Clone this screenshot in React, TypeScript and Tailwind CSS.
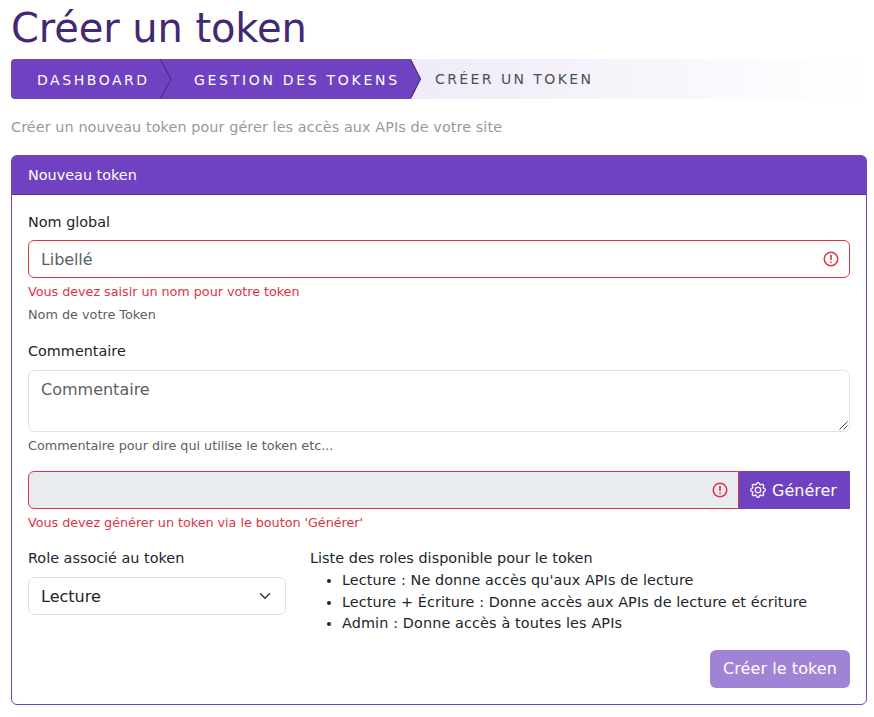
import type { ReactNode } from "react";
import { BsGear } from "react-icons/bs";

function InvalidIcon() {
  return (
    <svg className="size-[18px] shrink-0" viewBox="0 0 12 12" fill="none" stroke="#dc3545">
      <circle cx="6" cy="6" r="4.5" />
      <path strokeLinejoin="round" d="M5.9 3.7h.2L6 6.4z" />
      <circle cx="6" cy="8.2" r=".6" fill="#dc3545" stroke="none" />
    </svg>
  );
}

function Label({ children }: { children: ReactNode }) {
  return <div className="h-[22px] text-[14.4px] leading-[22px]">{children}</div>;
}

function Feedback({ children }: { children: ReactNode }) {
  return <div className="mt-1 h-[19px] text-[12.8px] leading-[19px] tracking-[-0.05px] text-[#dc3545]">{children}</div>;
}

const roles = [
  "Lecture : Ne donne accès qu'aux APIs de lecture",
  "Lecture + Écriture : Donne accès aux APIs de lecture et écriture",
  "Admin : Donne accès à toutes les APIs",
];

export default function App() {
  return (
    <div className="h-[717px] overflow-hidden whitespace-nowrap bg-white pl-[11px] pr-[7px] pt-[4px] font-['DejaVu_Sans',sans-serif] text-[#212529]">
      <h1 className="h-[55px] text-[40px] leading-[48px] tracking-[-0.1px] text-[#432874]">Créer un token</h1>

      <nav className="flex h-10 overflow-hidden rounded-[4px] bg-linear-to-r from-[#e2d9f3] to-white text-[14px] leading-[42px] tracking-[2.65px]">
        <div className="w-[149px] bg-[#6f42c1] pl-[26px] tracking-[2.55px] text-white">DASHBOARD</div>
        <svg className="h-10 w-[12px] bg-[#6f42c1]" viewBox="0 0 12 40" fill="none">
          <path d="M0.5 0.5 11 20 0.5 39.5" stroke="#432874" />
        </svg>
        <div className="w-[239px] bg-[#6f42c1] pl-[22px] tracking-[2.7px] text-white">GESTION DES TOKENS</div>
        <svg className="h-10 w-[12px]" viewBox="0 0 12 40">
          <path d="M0 0 9.8 20 0 40z" fill="#6f42c1" />
          <path d="M-0.5 0.5 9.6 20 -0.5 39.5" fill="none" stroke="#432874" />
        </svg>
        <div className="pl-[12px] leading-[41px] tracking-[2.42px] text-[#495057]">CRÉER UN TOKEN</div>
      </nav>

      <p className="mt-[17px] h-[22px] text-[14.4px] leading-[22px] tracking-[0.08px] text-[#999]">
        Créer un nouveau token pour gérer les accès aux APIs de votre site
      </p>

      <section className="mt-[17px] h-[550px] rounded-[6px] border border-[#6f42c1]">
        <header className="h-[39px] rounded-t-[4px] border-b border-[#59359a] bg-[#6f42c1] pl-4 text-[14.4px] leading-[38px] text-white">
          Nouveau token
        </header>
        <div className="flex flex-col px-4 pt-4">
          <Label>Nom global</Label>
          <div className="mt-[7px] flex h-[38px] items-center justify-between rounded-[6px] border border-[#dc3545] pl-3 pr-[9px] text-[#595f64]">
            <span className="pt-px tracking-[-0.1px]">Libellé</span>
            <InvalidIcon />
          </div>
          <Feedback>Vous devez saisir un nom pour votre token</Feedback>
          <div className="mt-1 h-[19px] text-[12.8px] leading-[19px] text-[#595f64]">Nom de votre Token</div>

          <div className="mt-4">
            <Label>Commentaire</Label>
          </div>
          <div className="mt-[8px] flex h-[62px] items-end justify-between rounded-[6px] border border-[#dee2e6] pl-3 text-[#595f64]">
            <span className="h-[53px] leading-6">Commentaire</span>
            <svg className="mb-px mr-px size-[9px]" viewBox="0 0 9 9" stroke="#444">
              <path d="M0.5 8.5 8.5 0.5M4.5 8.5 8.5 4.5" />
            </svg>
          </div>
          <div className="mt-1 h-[19px] text-[12.8px] leading-[19px] tracking-[-0.03px] text-[#595f64]">
            Commentaire pour dire qui utilise le token etc...
          </div>

          <div className="mt-4 flex h-[38px]">
            <div className="flex flex-1 items-center justify-end rounded-l-[6px] border border-[#dc3545] bg-[#e9ecef] pr-[9px]">
              <InvalidIcon />
            </div>
            <button className="flex w-[111px] items-center bg-[#6f42c1] pl-[12px] text-white">
              <BsGear className="mr-[6px] -ml-px size-4 stroke-white stroke-[0.3]" />
              <span className="pt-px">Générer</span>
            </button>
          </div>
          <Feedback>Vous devez générer un token via le bouton 'Générer'</Feedback>

          <div className="mt-[15px] flex">
            <div className="w-[258px]">
              <Label>Role associé au token</Label>
              <div className="mt-[8px] flex h-[38px] items-center justify-between rounded-[6px] border border-[#dee2e6] px-3">
                <span className="pt-px">Lecture</span>
                <svg className="h-3 w-4" viewBox="0 0 16 16" fill="none" stroke="#343a40" strokeWidth="2" strokeLinecap="round" strokeLinejoin="round">
                  <path d="m2 5 6 6 6-6" />
                </svg>
              </div>
            </div>
            <div className="ml-6 pt-px text-[14.4px] leading-[21.6px]">
              <div className="h-[22px] tracking-[0.03px]">Liste des roles disponible pour le token</div>
              <ul className="list-disc pl-8 tracking-[0.08px]">
                {roles.map((r) => (
                  <li key={r} className="last:tracking-[0.12px]">{r}</li>
                ))}
              </ul>
            </div>
          </div>

          <button className="mt-[15px] h-[38px] w-[140px] self-end rounded-[6px] bg-[#6f42c1] pt-px tracking-[0.08px] text-white opacity-65">
            Créer le token
          </button>
        </div>
      </section>
    </div>
  );
}
